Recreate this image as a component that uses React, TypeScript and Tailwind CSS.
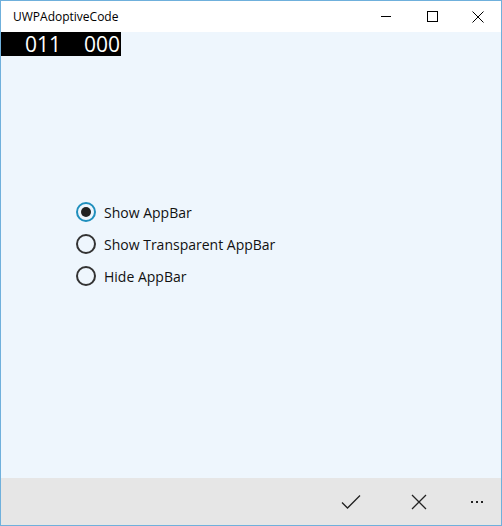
import { useState } from "react"

const options = ["Show AppBar", "Show Transparent AppBar", "Hide AppBar"]

function Radio({ checked }: { checked: boolean }) {
	return (
		<span
			className={`flex h-5 w-5 items-center justify-center rounded-full border-2 ${
				checked ? "border-[#1f8fbd]" : "border-[#333333]"
			}`}
		>
			{checked && <span className="h-[10px] w-[10px] rounded-full bg-[#222222]" />}
		</span>
	)
}

export default function App() {
	const [selected, setSelected] = useState(0)

	return (
		<div
			className="flex h-[526px] w-[502px] flex-col border border-[#6fb0dc] bg-[#eef6fd]"
			style={{ fontFamily: '"Open Sans", "Noto Sans", sans-serif' }}
		>
			{/* Title bar */}
			<div className="flex h-[31px] shrink-0 items-center bg-white text-black">
				<span className="flex-1 pl-3 text-[12px]">UWPAdoptiveCode</span>
				<button className="flex h-full w-[46px] items-center justify-center">
					<span className="block h-px w-[10px] bg-black" />
				</button>
				<button className="flex h-full w-[46px] items-center justify-center">
					<span className="block h-[11px] w-[11px] border border-black" />
				</button>
				<button className="flex h-full w-[46px] items-center justify-center">
					<svg width="12" height="12" viewBox="0 0 12 12" stroke="black" strokeWidth="1">
						<path d="M0.5 0.5L11.5 11.5M11.5 0.5L0.5 11.5" />
					</svg>
				</button>
			</div>

			{/* Frame counter */}
			<div className="flex h-[24px] w-[120px] items-center justify-end gap-[23px] bg-black pr-[1px] text-[21px] font-medium leading-none text-white">
				<span>011</span>
				<span>000</span>
			</div>

			{/* Content */}
			<div className="flex flex-1 flex-col gap-3 pl-[75px] pt-[146px]">
				{options.map((label, i) => (
					<label
						key={label}
						className="flex h-5 cursor-pointer items-center gap-2 text-[14px] text-[#111111]"
						onClick={() => setSelected(i)}
					>
						<Radio checked={selected === i} />
						<span>{label}</span>
					</label>
				))}
			</div>

			{/* App bar */}
			<div className="flex h-[47px] shrink-0 items-center justify-end bg-[#e6e6e6]">
				<button className="flex h-full w-[68px] items-center justify-center">
					<svg width="20" height="16" viewBox="0 0 20 16" fill="none" stroke="#222" strokeWidth="1.3">
						<path d="M1 8.5L6.5 14L19 1.5" />
					</svg>
				</button>
				<button className="flex h-full w-[68px] items-center justify-center">
					<svg width="16" height="16" viewBox="0 0 16 16" fill="none" stroke="#222" strokeWidth="1.3">
						<path d="M1 1L15 15M15 1L1 15" />
					</svg>
				</button>
				<button className="flex h-full w-[48px] items-center justify-center">
					<span className="flex gap-[3px]">
						<span className="h-[2px] w-[2px] bg-[#222]" />
						<span className="h-[2px] w-[2px] bg-[#222]" />
						<span className="h-[2px] w-[2px] bg-[#222]" />
					</span>
				</button>
			</div>
		</div>
	)
}
